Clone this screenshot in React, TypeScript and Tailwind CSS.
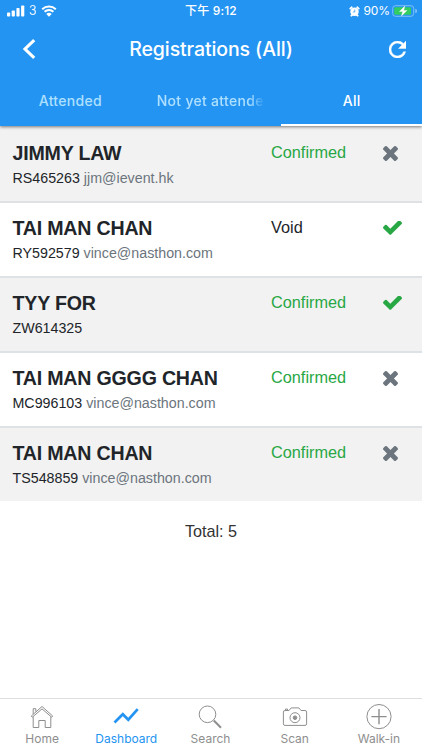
import React from "react";

const registrations = [
  { name: "JIMMY LAW", code: "RS465263", email: "jjm@ievent.hk", status: "Confirmed", attended: false },
  { name: "TAI MAN CHAN", code: "RY592579", email: "vince@nasthon.com", status: "Void", attended: true },
  { name: "TYY FOR", code: "ZW614325", email: "", status: "Confirmed", attended: true },
  { name: "TAI MAN GGGG CHAN", code: "MC996103", email: "vince@nasthon.com", status: "Confirmed", attended: false },
  { name: "TAI MAN CHAN", code: "TS548859", email: "vince@nasthon.com", status: "Confirmed", attended: false },
];

const CheckIcon = () => (
  <svg viewBox="120 398 1552 1126" className="h-[14px] w-[19px] fill-[#28a745]">
    <path d="M1671 566q0 40-28 68l-724 724-136 136q-28 28-68 28t-68-28l-136-136-362-362q-28-28-28-68t28-68l136-136q28-28 68-28t68 28l294 295 656-657q28-28 68-28t68 28l136 136q28 28 28 68z" />
  </svg>
);

const TimesIcon = () => (
  <svg viewBox="302 366 1188 1188" className="h-[15px] w-[15px] fill-[#6c757d]">
    <path d="M1490 1322q0 40-28 68l-136 136q-28 28-68 28t-68-28l-294-294-294 294q-28 28-68 28t-68-28l-136-136q-28-28-28-68t28-68l294-294-294-294q-28-28-28-68t28-68l136-136q28-28 68-28t68 28l294 294 294-294q28-28 68-28t68 28l136 136q28 28 28 68t-28 68l-294 294 294 294q28 28 28 68z" />
  </svg>
);

const StatusBar = () => (
  <div className="grid h-[22px] grid-cols-3 items-center text-[12px] leading-[22px]">
    <div className="flex items-center pl-[7px]">
      <svg viewBox="0 0 18 12" className="h-3 w-[18px] fill-white">
        <rect x="0" y="7.5" width="3.2" height="4" rx="0.8" />
        <rect x="4.7" y="5.5" width="3.2" height="6" rx="0.8" />
        <rect x="9.4" y="3" width="3.2" height="8.5" rx="0.8" />
        <rect x="14.1" y="0.5" width="3.2" height="11" rx="0.8" />
      </svg>
      <span className="ml-[4px] text-[12.5px] opacity-90">3</span>
      <svg viewBox="0 0 16 12" className="ml-[4px] h-3 w-4">
        <path d="M1.2 4.2a9.8 9.8 0 0 1 13.6 0M3.6 6.8a6.3 6.3 0 0 1 8.8 0" fill="none" stroke="white" strokeWidth="2" />
        <path d="M8 11.7 5.3 9a3.8 3.8 0 0 1 5.4 0z" fill="white" />
      </svg>
    </div>
    <div className="text-center font-medium tracking-[0.15px]">下午 9:12</div>
    <div className="flex items-center justify-end pr-[5px]">
      <svg viewBox="0 0 12 12" className="h-[11px] w-[11px]">
        <path d="M1.4 2.8 3 1.4M10.6 2.8 9 1.4M2.6 10.6l.8-.8M9.4 10.6l-.8-.8" stroke="white" strokeWidth="2" strokeLinecap="round" />
        <circle cx="6" cy="6.2" r="4.6" fill="white" />
        <path d="M6.3 3.8v2.7H4.2" fill="none" stroke="#2494f2" strokeWidth="0.8" />
      </svg>
      <span className="ml-[4px] tracking-[-0.1px]">90%</span>
      <svg viewBox="0 0 25 12" className="ml-[2px] h-3 w-[25px]">
        <rect x="0.7" y="0.7" width="21" height="10.6" rx="2.8" fill="none" stroke="#7fc0f8" />
        <path d="M23.2 4v4a2 2 0 0 0 0-4z" fill="#7fc0f8" />
        <rect x="2.2" y="2.2" width="16.8" height="7.6" rx="1.3" fill="#33cd62" />
        <path d="M12.8 1.1 7.5 6.5h3.2l-1.2 4.4 5.4-5.4h-3.2z" fill="white" stroke="white" strokeWidth="0.4" />
      </svg>
    </div>
  </div>
);

const Header = () => (
  <header className="relative z-10 h-[126px] bg-[#2494f2] text-white shadow-[0_1px_3px_rgba(0,0,0,0.5)]">
    <StatusBar />
    <div className="flex h-[54px] items-center justify-between pl-[22px] pr-4">
      <svg viewBox="0 0 14 20" className="h-5 w-[14px]">
        <path d="M12.2 1.2 3 10l9.2 8.8" fill="none" stroke="white" strokeWidth="3.1" />
      </svg>
      <h1 className="mr-[3px] pt-[2px] text-[19.5px] font-medium tracking-[-0.1px]">Registrations (All)</h1>
      <svg viewBox="4 4 16 16" className="h-[17px] w-[17px] fill-white stroke-white" strokeWidth="0.4">
        <path d="M17.65 6.35A7.96 7.96 0 0 0 12 4a8 8 0 1 0 7.73 10h-2.08A6 6 0 1 1 12 6c1.66 0 3.14.69 4.22 1.78L13 11h7V4z" />
      </svg>
    </div>
    <nav className="grid h-[50px] grid-cols-3 text-[14px] font-medium tracking-[0.3px]">
      <div className="flex items-center justify-center pb-[2px] text-[#aee0ff]">Attended</div>
      <div className="mx-4 flex items-center overflow-hidden whitespace-nowrap pb-[2px] text-[#aee0ff] [mask-image:linear-gradient(to_right,black_85%,transparent)]">
        Not yet attended
      </div>
      <div className="flex items-center justify-center border-b-2 border-white">All</div>
    </nav>
  </header>
);

const tabs = [
  {
    label: "Home",
    icon: (
      <g>
        <path d="M3.3 13 14 3.5 24.7 13l-1 1.2L14 5.9l-9.7 8.3z" />
        <path d="M5.2 13.7v10.8h5.6v-7h6.4v7h5.6V13.7M5.2 11V5.7h2.6V8.500" />
      </g>
    ),
  },
  { label: "Dashboard", icon: <path d="m2.5 19.5 8.3-8.3 5.5 5.5L25.7 6.2" strokeWidth="2.7" /> },
  {
    label: "Search",
    icon: (
      <g>
        <circle cx="11.5" cy="11.3" r="8.3" />
        <path d="m17.8 17.5 7.2 7.2" strokeWidth="2" />
      </g>
    ),
  },
  {
    label: "Scan",
    icon: (
      <g>
        <path d="M4 7.5h4l2.2-2.6h7.6L20 7.5h4a1.6 1.6 0 0 1 1.6 1.6v11.7a1.6 1.6 0 0 1-1.6 1.6H4a1.6 1.6 0 0 1-1.6-1.6V9.1A1.6 1.6 0 0 1 4 7.5zM4.5 7.3V6h2v1.3" />
        <circle cx="14" cy="14.7" r="5" />
        <circle cx="14" cy="14.7" r="1.8" fill="currentColor" />
      </g>
    ),
  },
  {
    label: "Walk-in",
    icon: (
      <g>
        <circle cx="14" cy="13.6" r="12.1" />
        <path d="M14 6v15.2M6.4 13.6h15.2" strokeWidth="1.4" />
      </g>
    ),
  },
];

export default function App() {
  return (
    <div className="flex h-[750px] w-[422px] flex-col overflow-hidden bg-white font-['Inter','Noto_Sans_CJK_TC',sans-serif]">
      <Header />
      <main className="flex-1 font-['Liberation_Sans',Arial,sans-serif] text-[#212529]">
        {registrations.map((item, i) => (
          <div
            key={item.code}
            className={`flex h-[75px] pl-[12.5px] ${i > 0 ? "border-t-2 border-[#dfe2e5] pt-[13px]" : "pt-[15px]"} ${i % 2 === 0 ? "bg-[#f2f2f2]" : "bg-white"}`}
          >
            <div className="w-[258.5px]">
              <h2 className="text-[19.6px] font-bold leading-6 tracking-[-0.2px]">{item.name}</h2>
              <p className="mt-[3px] text-[14.25px] leading-5">
                {item.code} <span className="text-[#6c757d]">{item.email}</span>
              </p>
            </div>
            <div className={`w-[112px] text-[16.3px] leading-[22px] ${item.status === "Confirmed" ? "text-[#28a745]" : ""}`}>
              {item.status}
            </div>
            <div className="pt-[5px]">{item.attended ? <CheckIcon /> : <TimesIcon />}</div>
          </div>
        ))}
        <p className="pt-[18px] text-center text-[16.2px] leading-6 text-[#333]">Total: 5</p>
      </main>
      <footer className="grid h-[52px] grid-cols-5 border-t border-[#dedede] pr-px text-[12px] text-[#8e8e8e]">
        {tabs.map((tab) => (
          <div
            key={tab.label}
            className={`flex flex-col items-center pt-1 ${tab.label === "Dashboard" ? "text-[#2494f2]" : ""}`}
          >
            <svg viewBox="0 0 28 28" className="h-7 w-7" fill="none" stroke="currentColor" strokeWidth="1">
              {tab.icon}
            </svg>
            <span className="leading-[15px]">{tab.label}</span>
          </div>
        ))}
      </footer>
    </div>
  );
}
